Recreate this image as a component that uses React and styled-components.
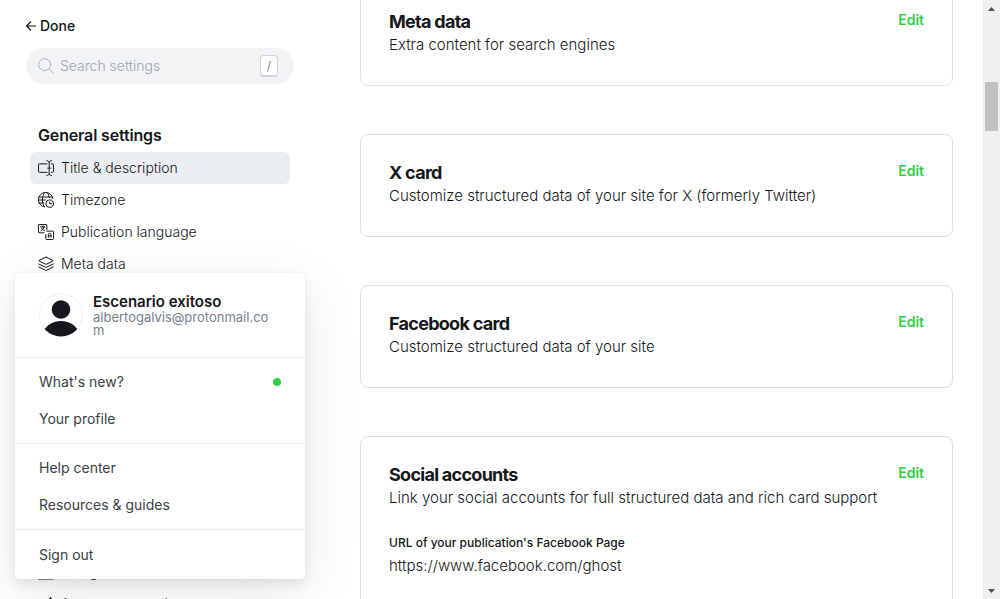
import React from "react";
import styled, { createGlobalStyle } from "styled-components";

const Global = createGlobalStyle`
  *, *::before, *::after { box-sizing: border-box; }
  body {
    margin: 0;
    background: #fff;
    color: #15171a;
    font-family: Inter, "Liberation Sans", sans-serif;
    font-size: 14px;
    line-height: 20px;
  }
  h2, p, ul { margin: 0; padding: 0; }
  ul { list-style: none; }
  button, input { font: inherit; color: inherit; }
  a { color: inherit; text-decoration: none; }
`;

const Shell = styled.div`
  position: relative;
  display: grid;
  grid-template-columns: 320px minmax(0, 1fr) 17px;
  height: 100vh;
  overflow: hidden;
`;

const Sidebar = styled.aside`
  min-height: 0;
  overflow: hidden;
  padding: 16px 26px 0;
`;

const PlainButton = styled.button`
  display: flex;
  align-items: center;
  padding: 0;
  border: 0;
  background: none;
  cursor: pointer;
`;

const DoneButton = styled(PlainButton)`
  gap: 4px;
  height: 20px;
  font-weight: 500;
`;

const SearchBox = styled.label`
  display: flex;
  align-items: center;
  gap: 6px;
  height: 36px;
  margin-top: 12px;
  padding: 0 16px 0 12px;
  border-radius: 18px;
  background: #f1f3f4;
  color: #abb4be;
`;

const SearchInput = styled.input`
  flex: 1;
  min-width: 0;
  padding: 0;
  border: 0;
  outline: 0;
  background: none;
  color: #15171a;
  font-weight: 300;
  &::placeholder { color: #9ba6b1; opacity: 1; }
`;

const Shortcut = styled.kbd`
  display: flex;
  align-items: center;
  justify-content: center;
  width: 18px;
  height: 22px;
  border: 1px solid #ced4d9;
  border-bottom-width: 2px;
  border-radius: 4px;
  background: #fff;
  color: #7c8b9a;
  font: 400 12px/16px Inter, sans-serif;
`;

const NavGroup = styled.section`
  margin: ${(p) => p.$gap}px 4px 0;
`;

const NavHeading = styled.h2`
  padding: 0 8px;
  margin-bottom: 7px;
  font-size: 16px;
  font-weight: 600;
  line-height: 20px;
  letter-spacing: -0.01em;
`;

const NavLink = styled.a`
  display: flex;
  align-items: center;
  gap: 7px;
  height: 32px;
  padding: 0 8px;
  border-radius: 6px;
  background: ${(p) => (p.$active ? "#ebeef0" : "transparent")};
  color: #15171a;
  font-weight: 300;
  svg { flex: none; }
`;

const Main = styled.main`
  min-width: 0;
  min-height: 0;
  overflow: hidden;
  padding: 0 30px 0 40px;
`;

const CardList = styled.div`
  display: flex;
  flex-direction: column;
  gap: 48px;
  margin-top: -17px;
`;

const Card = styled.section`
  display: flex;
  flex-direction: column;
  gap: 24px;
  padding: 24px 28px 29px;
  border: 1px solid #dddfe4;
  border-radius: 8px;
`;

const CardHead = styled.header`
  display: flex;
  align-items: flex-start;
  justify-content: space-between;
  gap: 16px;
`;

const CardTitle = styled.h2`
  padding-top: 2px;
  font-size: 18px;
  font-weight: 700;
  line-height: 24px;
  letter-spacing: -0.04em;
`;

const CardText = styled.p`
  font-size: 15px;
  font-weight: 300;
  line-height: 22px;
`;

const EditButton = styled(PlainButton)`
  height: 24px;
  color: #30cf43;
  font-weight: 600;
`;

const FieldLabel = styled.h2`
  font-size: 12px;
  font-weight: 500;
  line-height: 20px;
  margin-bottom: 2px;
`;

const ScrollTrack = styled.div`
  display: flex;
  flex-direction: column;
  align-items: center;
  background: #f0f0f0;
`;

const ScrollArrow = styled.span`
  display: flex;
  align-items: center;
  justify-content: center;
  height: 17px;
  &:last-child { margin-top: auto; }
`;

const ScrollThumb = styled.span`
  width: 13px;
  height: 49px;
  margin-top: 65px;
  background: #c1c1c1;
`;

const Menu = styled.div`
  position: absolute;
  left: 15px;
  bottom: 20px;
  width: 290px;
  border-radius: 4px;
  background: #fff;
  box-shadow: 0 0 1px rgba(0, 0, 0, 0.12), 0 5px 12px rgba(0, 0, 0, 0.08),
    0 16px 60px rgba(0, 0, 0, 0.09);
`;

const Profile = styled.div`
  display: flex;
  gap: 10px;
  padding: 20px 28px 20px 24px;
`;

const Avatar = styled.span`
  flex: none;
  width: 44px;
  height: 44px;
`;

const UserName = styled.p`
  font-size: 15px;
  font-weight: 600;
  line-height: 18px;
`;

const Email = styled.p`
  color: #74808c;
  font-size: 13px;
  line-height: 13px;
  overflow-wrap: anywhere;
`;

const MenuGroup = styled.ul`
  padding: 5px 0 6px;
  border-top: 1px solid #ebeef0;
  &:last-child { padding-top: 6px; }
`;

const MenuLink = styled.a`
  display: flex;
  align-items: center;
  justify-content: space-between;
  height: 37px;
  padding: 0 24px;
  color: #394047;
`;

const Dot = styled.span`
  width: 8px;
  height: 8px;
  border-radius: 50%;
  background: #30cf43;
`;

const Icon = ({ children }) => (
  <svg width="16" height="16" viewBox="0 0 24 24" fill="none" stroke="currentColor"
    strokeWidth="1.5" strokeLinecap="round" strokeLinejoin="round" aria-hidden="true">
    {children}
  </svg>
);

const icons = {
  title: (
    <Icon>
      <path d="M13.500 18.500H2.200a1.400 1.400 0 0 1-1.400-1.400V7.200a1.400 1.400 0 0 1 1.400-1.400H13.500M20 5.800h1.800a1.400 1.400 0 0 1 1.400 1.400v9.900a1.400 1.400 0 0 1-1.400 1.400H20M16.800 3.800v16.700M13.300 1c2 0 3.500 1 3.500 2.800C16.800 2 18.300 1 20.300 1M13.300 23.200c2 0 3.500-1 3.500-2.700 0 1.700 1.500 2.700 3.500 2.700M14.500 12.200h4.600" />
    </Icon>
  ),
  timezone: (
    <Icon>
      <circle cx="17.500" cy="17.500" r="5.700" />
      <path d="M17.500 14.800v2.700h2.700M9.500 22.400A11 11 0 1 1 22.400 9.500M9.300 22.300C7.700 20 6.700 16.200 6.700 12S7.700 3.500 9.800.9M14 .9c1.500 1.900 2.500 4.400 2.900 7.600M1.500 7.500h20.200M.8 12h9.700M1.500 16.500h7.200" />
    </Icon>
  ),
  language: (
    <Icon>
      <path d="M9 13.200H1.500a.8.8 0 0 1-.8-.8V1.500a.8.8 0 0 1 .8-.8h11a.8.8 0 0 1 .8.800v6.700" />
      <path d="M4 4.300h6M7 3v1.300M9 4.300c-.5 2.700-2.200 4.700-4.600 5.700M5.300 6c.8 2 2.300 3.300 4.400 4" />
      <path d="M13 10.700h8.800a1.500 1.500 0 0 1 1.500 1.500v9.600a1.500 1.500 0 0 1-1.500 1.500h-8.600a1.500 1.500 0 0 1-1.500-1.500V16" />
      <path d="M15.500 20v-4a2 2 0 0 1 4 0v4M15.500 17.800h4" />
    </Icon>
  ),
  layers: (
    <Icon>
      <path d="M12.700 1.900l9.500 4.600c.5.300.5.900 0 1.200l-9.500 4.600a1.700 1.700 0 0 1-1.400 0L1.800 7.700c-.5-.3-.5-.9 0-1.200l9.500-4.600a1.700 1.700 0 0 1 1.400 0zM22.800 12l-10.100 4.900a1.700 1.700 0 0 1-1.400 0L1.200 12M22.800 16.500l-10.100 4.900a1.700 1.700 0 0 1-1.400 0L1.200 16.500" />
    </Icon>
  ),
  design: (
    <Icon>
      <path d="M.8 2h22.400v20.500H.8zM.8 8h22.400M8 8v14" />
    </Icon>
  ),
  megaphone: (
    <Icon>
      <path d="M6 16.500H4.500a4 4 0 0 1 0-8H6c5 0 9-2 13.500-6.700v21C15 18.500 11 16.500 6 16.500zM6 8.500v8M22.500 10.500v4M6 16.500c0 3 1 5 2.500 6.500" />
    </Icon>
  ),
};

const general = [
  ["Title & description", "title"],
  ["Timezone", "timezone"],
  ["Publication language", "language"],
  ["Meta data", "layers"],
];

const site = [
  ["Design", "design"],
  ["Announcement bar", "megaphone"],
];

const cards = [
  { title: "Meta data", text: "Extra content for search engines" },
  { title: "X card", text: "Customize structured data of your site for X (formerly Twitter)" },
  { title: "Facebook card", text: "Customize structured data of your site" },
  {
    title: "Social accounts",
    text: "Link your social accounts for full structured data and rich card support",
    label: "URL of your publication's Facebook Page",
    value: "https://www.facebook.com/ghost",
  },
];

const menu = [
  [{ label: "What's new?", dot: true }, { label: "Your profile" }],
  [{ label: "Help center" }, { label: "Resources & guides" }],
  [{ label: "Sign out" }],
];

const NavItems = ({ items, active }) => (
  <ul>
    {items.map(([label, icon]) => (
      <li key={label}>
        <NavLink href="#" $active={label === active}>
          {icons[icon]}
          {label}
        </NavLink>
      </li>
    ))}
  </ul>
);

export default function App() {
  return (
    <Shell>
      <Global />
      <Sidebar>
        <DoneButton type="button">
          <svg width="10" height="10" viewBox="0 0 10 10" fill="none" stroke="currentColor"
            strokeWidth="1.200" strokeLinecap="round" strokeLinejoin="round" aria-hidden="true">
            <path d="M9.500 5H.6M4.600 1L.6 5l4 4" />
          </svg>
          Done
        </DoneButton>
        <SearchBox>
          <Icon>
            <circle cx="10" cy="10" r="9" />
            <path d="M16.500 16.500l6.500 6.500" />
          </Icon>
          <SearchInput type="text" placeholder="Search settings" aria-label="Search settings" />
          <Shortcut>/</Shortcut>
        </SearchBox>
        <NavGroup $gap={41}>
          <NavHeading>General settings</NavHeading>
          <NavItems items={general} active="Title & description" />
        </NavGroup>
        <NavGroup $gap={276}>
          <NavItems items={site} />
        </NavGroup>
      </Sidebar>
      <Main>
        <CardList>
          {cards.map((c) => (
            <Card key={c.title}>
              <CardHead>
                <div>
                  <CardTitle>{c.title}</CardTitle>
                  <CardText>{c.text}</CardText>
                </div>
                <EditButton type="button">Edit</EditButton>
              </CardHead>
              {c.label && (
                <div>
                  <FieldLabel>{c.label}</FieldLabel>
                  <CardText>{c.value}</CardText>
                </div>
              )}
            </Card>
          ))}
        </CardList>
      </Main>
      <ScrollTrack aria-hidden="true">
        <ScrollArrow>
          <svg width="7" height="4" viewBox="0 0 7 4"><path d="M0 4L3.500 0 7 4z" fill="#505050" /></svg>
        </ScrollArrow>
        <ScrollThumb />
        <ScrollArrow>
          <svg width="7" height="4" viewBox="0 0 7 4"><path d="M0 0l3.500 4L7 0z" fill="#505050" /></svg>
        </ScrollArrow>
      </ScrollTrack>
      <Menu>
        <Profile>
          <Avatar>
            <svg width="44" height="44" viewBox="0 0 44 44" aria-hidden="true">
              <defs>
                <clipPath id="face"><circle cx="22" cy="22" r="21.500" /></clipPath>
              </defs>
              <circle cx="22" cy="22" r="21.500" fill="#fff" stroke="#ebeef0" />
              <g fill="#15171a" clipPath="url(#face)">
                <circle cx="22" cy="16.500" r="9.300" />
                <path d="M4 40c2-7 9-12 18-12s16 5 18 12v4H4z" />
              </g>
            </svg>
          </Avatar>
          <div>
            <UserName>Escenario exitoso</UserName>
            <Email>albertogalvis@protonmail.com</Email>
          </div>
        </Profile>
        {menu.map((group) => (
          <MenuGroup key={group[0].label}>
            {group.map((item) => (
              <li key={item.label}>
                <MenuLink href="#">
                  {item.label}
                  {item.dot && <Dot />}
                </MenuLink>
              </li>
            ))}
          </MenuGroup>
        ))}
      </Menu>
    </Shell>
  );
}
